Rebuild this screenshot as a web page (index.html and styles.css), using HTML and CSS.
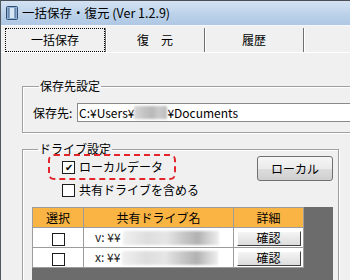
FILE: index.html
```html
<!DOCTYPE html>
<html lang="ja">
<head>
    <meta charset="UTF-8">
    <meta name="viewport" content="width=device-width, initial-scale=1.0">
    <link rel="stylesheet" href="styles.css">
</head>
<body>
    <div class="window">
        <div class="titlebar">
            <svg class="app-icon" width="14" height="16" viewBox="0 0 14 16">
                <rect x="1.5" y="1.5" width="11" height="13" rx="1" fill="#8fb0d2" stroke="#2f4d72"/>
                <rect x="4" y="3" width="6" height="10" fill="#d6e5f4"/>
                <line x1="4" y1="3" x2="4" y2="13" stroke="#3d6290"/>
                <line x1="10" y1="3" x2="10" y2="13" stroke="#3d6290"/>
            </svg>
            <span class="title">一括保存・復元 (Ver 1.2.9)</span>
        </div>

        <div class="tabs">
            <div class="tab active"><span class="focus">一括保存</span></div>
            <div class="tab">復　元</div>
            <div class="tab">履歴</div>
        </div>

        <div class="page">
            <fieldset class="group save-group">
                <legend>保存先設定</legend>
                <div class="path-row">
                    <span class="path-label">保存先:</span>
                    <div class="path-input">C:¥Users¥<span class="blur blur-user"></span>¥Documents</div>
                </div>
            </fieldset>

            <fieldset class="group drive-group">
                <legend>ドライブ設定</legend>
                <div class="drive-top">
                    <div class="checks">
                        <div class="highlight">
                            <label class="check"><span class="box checked">✔</span>ローカルデータ</label>
                        </div>
                        <label class="check second"><span class="box"></span>共有ドライブを含める</label>
                    </div>
                    <button class="btn">ローカル</button>
                </div>

                <div class="grid">
                    <table>
                        <tr>
                            <th class="col-select">選択</th>
                            <th class="col-name">共有ドライブ名</th>
                            <th class="col-detail">詳細</th>
                        </tr>
                        <tr>
                            <td class="center"><span class="box"></span></td>
                            <td class="name">v: ¥¥<span class="blur blur-name"></span></td>
                            <td class="center"><button class="confirm">確認</button></td>
                        </tr>
                        <tr>
                            <td class="center"><span class="box"></span></td>
                            <td class="name">x: ¥¥<span class="blur blur-name"></span></td>
                            <td class="center"><button class="confirm">確認</button></td>
                        </tr>
                    </table>
                </div>
            </fieldset>
        </div>
    </div>
</body>
</html>
```

FILE: styles.css
```css
body {
    margin: 0;
    width: 350px;
    height: 280px;
    overflow: hidden;
    font-family: "Noto Sans CJK JP", "Liberation Sans", sans-serif;
    font-size: 12px;
    color: #000;
    background-color: #f0f0f0;
}
.window {
    width: 350px;
    height: 280px;
    overflow: hidden;
    background-color: #f0f0f0;
    border-left: 1px solid #505860;
    box-sizing: border-box;
}
.titlebar {
    display: flex;
    align-items: center;
    border-top: 1px solid #4a4f58;
    border-bottom: 1px solid #f4f8fc;
    background: linear-gradient(#d3e2f3, #bcd2ea 55%, #aec7e4);
    box-sizing: border-box;
    height: 26px;
}
.app-icon {
    margin-left: 4px;
    margin-right: 3px;
}
.title {
    font-size: 12.5px;
    line-height: 14px;
    margin-top: -1px;
}
.tabs {
    display: flex;
    height: 27px;
    padding: 2px 0 0 4px;
    box-sizing: border-box;
    border-bottom: 1px solid #ffffff;
}
.tab {
    width: 98px;
    height: 24px;
    display: flex;
    align-items: center;
    justify-content: center;
    border-right: 1px solid #6f6f6f;
    box-shadow: 1px 0 0 #ffffff;
    line-height: 14px;
}
.tab.active {
    width: 100px;
}
.focus {
    width: 100%;
    height: 100%;
    display: flex;
    align-items: center;
    justify-content: center;
    border: 1px dotted #000;
    box-sizing: border-box;
}
.page {
    padding: 27px 0 0 21px;
}
.group {
    margin: 0;
    border: 1px solid #a0a0a0;
    box-shadow: inset 1px 1px 0 #ffffff, 1px 1px 0 #ffffff;
    min-inline-size: 0;
}
.group legend {
    margin-left: 6px;
    padding: 0 1px;
    line-height: 12px;
}
.save-group {
    width: 360px;
    padding: 0 9px 10px 10px;
}
.path-row {
    display: flex;
    align-items: center;
    margin-top: 11px;
}
.path-label {
    width: 44px;
    line-height: 14px;
}
.path-input {
    flex: 1;
    height: 19px;
    box-sizing: border-box;
    border: 1px solid #8a8a8a;
    border-right: none;
    background-color: #fff;
    padding-left: 1px;
    display: flex;
    align-items: center;
    font-size: 12px;
    line-height: 14px;
}
.blur {
    display: inline-block;
    filter: blur(1px);
}
.blur-user {
    width: 33px;
    height: 13px;
    background: linear-gradient(to right, #d8d8d8, #c4c4c4 30%, #b9b9b9 55%, #cbcbcb 75%, #bdbdbd);
}
.drive-group {
    width: 317px;
    box-sizing: border-box;
    margin-top: 10px;
    padding: 0 4px 20px 9px;
}
.drive-top {
    display: flex;
    justify-content: space-between;
    align-items: flex-start;
    margin-top: -1px;
}
.checks {
    margin-left: 16px;
}
.highlight {
    width: 128px;
    height: 26px;
    box-sizing: border-box;
    border: 2px dashed #e3262b;
    border-radius: 6px;
    display: flex;
    align-items: center;
    padding-left: 12px;
}
.check {
    display: flex;
    align-items: center;
    line-height: 14px;
}
.check.second {
    margin: 3px 0 0 14px;
}
.box {
    width: 13px;
    height: 13px;
    box-sizing: border-box;
    border: 1px solid #1c1c1c;
    background-color: #fff;
    margin-right: 4px;
    display: inline-flex;
    align-items: center;
    justify-content: center;
    font-size: 10px;
    line-height: 10px;
}
.btn {
    margin: 2px 1px 0 0;
    width: 76px;
    height: 25px;
    font-family: inherit;
    font-size: 12px;
    border: 1px solid #707070;
    border-radius: 3px;
    background: linear-gradient(#f6f6f6 0%, #ebebeb 50%, #dddddd 51%, #cfcfcf 100%);
    padding: 0;
}
.grid {
    margin: 10px 0 0 0;
    width: 301px;
    height: 80px;
    background-color: #6c6c6c;
}
table {
    border-collapse: collapse;
    width: 271px;
    table-layout: fixed;
}
th, td {
    border: 1px solid #9c9c9c;
    padding: 0;
    height: 19px;
    line-height: 14px;
}
th {
    background-color: #f9b444;
    font-weight: normal;
    text-align: center;
}
td {
    background-color: #fff;
}
.col-select { width: 50px; }
.col-name { width: 149px; }
.col-detail { width: 69px; }
.center {
    text-align: center;
}
.center .box {
    margin: 3px 0 0 0;
    vertical-align: top;
}
.name {
    padding-left: 11px;
    color: #222;
    white-space: nowrap;
}
.blur-name {
    width: 96px;
    height: 14px;
    margin-left: 2px;
    vertical-align: middle;
    background: linear-gradient(to right, #f0f0f0, #dedede 25%, #e6e6e6 45%, #c9c9c9 62%, #b2b2b2 78%, #cfcfcf 88%, #eeeeee);
}
.confirm {
    width: 64px;
    height: 15px;
    padding: 0;
    font-family: inherit;
    font-size: 12px;
    line-height: 12px;
    border: 1px solid;
    border-color: #ffffff #404040 #404040 #ffffff;
    background: linear-gradient(#f5f5f5, #dcdcdc);
    vertical-align: middle;
}
```
